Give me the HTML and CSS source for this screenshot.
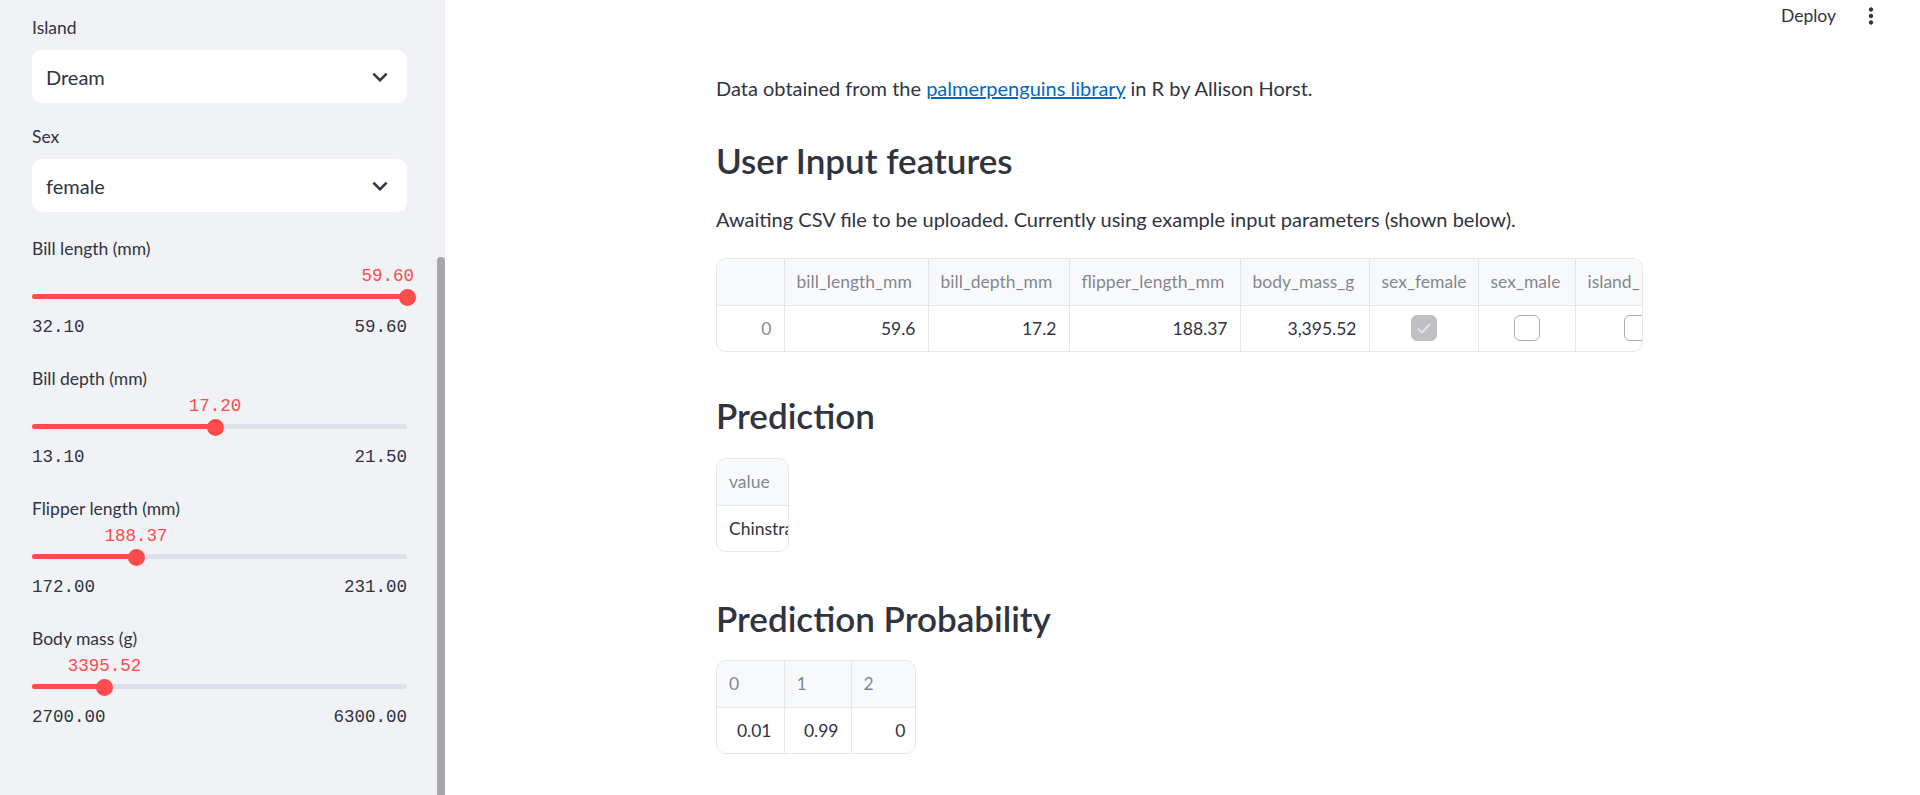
FILE: index.html
```html
<!DOCTYPE html>
<html>
<head>
<meta charset="utf-8">
<title>Penguin Prediction App</title>
<link rel="stylesheet" href="styles.css">
</head>
<body>
<div class="app">
  <aside class="sidebar">
    <div class="sidebar-content">
      <div class="field">
        <div class="label">Island</div>
        <div class="select"><span>Dream</span><svg class="chev" viewBox="0 0 24 24"><path d="M7.41 8.59 12 13.17l4.59-4.58L18 10l-6 6-6-6 1.41-1.41z"/></svg></div>
      </div>
      <div class="field field-last">
        <div class="label">Sex</div>
        <div class="select"><span>female</span><svg class="chev" viewBox="0 0 24 24"><path d="M7.41 8.59 12 13.17l4.59-4.58L18 10l-6 6-6-6 1.41-1.41z"/></svg></div>
      </div>

      <div class="slider">
        <div class="slider-label">Bill length (mm)</div>
        <div class="slider-body">
          <div class="thumb-value clamp-right">59.60</div>
          <div class="track"><div class="fill" style="width:100%"></div></div>
          <div class="thumb" style="left:100%"></div>
        </div>
        <div class="ticks"><span>32.10</span><span>59.60</span></div>
      </div>

      <div class="slider">
        <div class="slider-label">Bill depth (mm)</div>
        <div class="slider-body">
          <div class="thumb-value" style="left:48.81%">17.20</div>
          <div class="track"><div class="fill" style="width:48.81%"></div></div>
          <div class="thumb" style="left:48.81%"></div>
        </div>
        <div class="ticks"><span>13.10</span><span>21.50</span></div>
      </div>

      <div class="slider">
        <div class="slider-label">Flipper length (mm)</div>
        <div class="slider-body">
          <div class="thumb-value" style="left:27.75%">188.37</div>
          <div class="track"><div class="fill" style="width:27.75%"></div></div>
          <div class="thumb" style="left:27.75%"></div>
        </div>
        <div class="ticks"><span>172.00</span><span>231.00</span></div>
      </div>

      <div class="slider">
        <div class="slider-label">Body mass (g)</div>
        <div class="slider-body">
          <div class="thumb-value" style="left:19.32%">3395.52</div>
          <div class="track"><div class="fill" style="width:19.32%"></div></div>
          <div class="thumb" style="left:19.32%"></div>
        </div>
        <div class="ticks"><span>2700.00</span><span>6300.00</span></div>
      </div>
    </div>
    <div class="scrollbar"></div>
  </aside>

  <main class="main">
    <header class="topbar">
      <span class="deploy">Deploy</span>
      <svg class="kebab" viewBox="0 0 24 24"><path d="M12 8c1.1 0 2-.9 2-2s-.9-2-2-2-2 .9-2 2 .9 2 2 2zm0 2c-1.1 0-2 .9-2 2s.9 2 2 2 2-.9 2-2-.9-2-2-2zm0 6c-1.1 0-2 .9-2 2s.9 2 2 2 2-.9 2-2-.9-2-2-2z"/></svg>
    </header>

    <div class="block">
      <p class="intro">Data obtained from the <a href="#">palmerpenguins library</a> in R by Allison Horst.</p>

      <h3 class="h-first">User Input features</h3>
      <p class="await">Awaiting CSV file to be uploaded. Currently using example input parameters (shown below).</p>

      <div class="df df-wide">
        <table class="grid grid-wide">
          <colgroup>
            <col class="w-idx"><col class="w-144"><col class="w-141"><col class="w-171"><col class="w-129"><col class="w-109"><col class="w-97"><col class="w-124">
          </colgroup>
          <thead>
            <tr><th></th><th>bill_length_mm</th><th>bill_depth_mm</th><th>flipper_length_mm</th><th>body_mass_g</th><th>sex_female</th><th>sex_male</th><th>island_</th></tr>
          </thead>
          <tbody>
            <tr>
              <td class="idx">0</td><td class="num">59.6</td><td class="num">17.2</td><td class="num">188.37</td><td class="num">3,395.52</td>
              <td class="chk"><span class="cb cb-on"><svg viewBox="0 0 24 24"><path d="M6 12.5l4 4 8-8.5"/></svg></span></td>
              <td class="chk"><span class="cb"></span></td>
              <td class="chk"><span class="cb"></span></td>
            </tr>
          </tbody>
        </table>
      </div>

      <h3 class="h-pred">Prediction</h3>
      <div class="df df-pred">
        <table class="grid grid-pred">
          <colgroup><col class="w-pred"></colgroup>
          <thead><tr><th>value</th></tr></thead>
          <tbody><tr><td class="txt">Chinstrap</td></tr></tbody>
        </table>
      </div>

      <h3 class="h-prob">Prediction Probability</h3>
      <div class="df df-prob">
        <table class="grid grid-prob">
          <colgroup><col class="w-67"><col class="w-67"><col class="w-67"></colgroup>
          <thead><tr><th>0</th><th>1</th><th>2</th></tr></thead>
          <tbody><tr><td class="num">0.01</td><td class="num">0.99</td><td class="num">0</td></tr></tbody>
        </table>
      </div>
    </div>
  </main>
</div>
</body>
</html>
```

FILE: styles.css
```css
* { box-sizing: border-box; }

html, body {
  margin: 0;
  padding: 0;
  height: 100%;
  overflow: hidden;
  background: #ffffff;
}

body {
  font-family: "Lato", "Noto Sans", sans-serif;
  color: rgb(49, 51, 63);
}

.app {
  display: flex;
  height: 795px;
}

/* ---------- Sidebar ---------- */
.sidebar {
  width: 445px;
  flex: 0 0 445px;
  background: #f0f2f6;
  display: flex;
}

.sidebar-content {
  flex: 1;
  padding: 17px 30px 0 32px;
}

.scrollbar {
  width: 8px;
  margin-top: 257px;
  background: #a6a6ab;
  border-radius: 4px 4px 0 0;
}

.label {
  font-size: 17.5px;
  line-height: 22px;
  height: 22px;
  margin-bottom: 11px;
}

.field { margin-bottom: 23px; }
.field-last { margin-bottom: 26px; }

.select {
  height: 53px;
  background: #ffffff;
  border-radius: 10px;
  display: flex;
  align-items: center;
  justify-content: space-between;
  padding: 0 12px 0 14px;
  font-size: 20px;
}

.chev {
  width: 30px;
  height: 30px;
  fill: rgb(49, 51, 63);
}

.slider { margin-bottom: 30px; }

.slider-label {
  font-size: 17.5px;
  line-height: 22px;
  height: 22px;
}

.slider-body {
  position: relative;
  padding-top: 34px;
}

.track {
  height: 5px;
  border-radius: 3px;
  background: #dde0e8;
  overflow: hidden;
}

.fill {
  height: 100%;
  background: #ff4b4b;
}

.thumb {
  position: absolute;
  top: 28.5px;
  width: 17px;
  height: 17px;
  margin-left: -8.5px;
  border-radius: 50%;
  background: #ff4b4b;
}

.thumb-value {
  position: absolute;
  top: 5px;
  transform: translateX(-50%);
  font-family: "Liberation Mono", "DejaVu Sans Mono", monospace;
  font-size: 17.5px;
  line-height: 22px;
  color: #ff4b4b;
  white-space: nowrap;
}

.thumb-value.clamp-right {
  right: -7px;
  transform: none;
}

.ticks {
  display: flex;
  justify-content: space-between;
  margin-top: 17px;
  font-family: "Liberation Mono", "DejaVu Sans Mono", monospace;
  font-size: 17.5px;
  line-height: 22px;
}

/* ---------- Main ---------- */
.main {
  flex: 1;
  min-width: 0;
}

.topbar {
  height: 32px;
  display: flex;
  justify-content: flex-end;
  align-items: center;
  padding-right: 36px;
  gap: 22px;
}

.deploy {
  font-size: 17.5px;
  line-height: 22px;
}

.kebab {
  width: 26px;
  height: 26px;
  fill: rgb(49, 51, 63);
}

.block {
  margin-left: 271px;
  width: 927px;
  padding-top: 40px;
}

.intro, .await {
  margin: 0;
  font-size: 20px;
  line-height: 32px;
}

.intro a {
  color: #0068c9;
  text-decoration: underline;
}

.await { margin-top: 22px; }

h3 {
  margin: 0;
  font-size: 35px;
  line-height: 42px;
  font-weight: 600;
  color: rgb(49, 51, 63);
}

.h-first { margin-top: 35px; }
.h-pred { margin-top: 42px; }
.h-prob { margin-top: 45px; }

/* ---------- Data frames ---------- */
.df {
  border: 1px solid #e6e7ea;
  border-radius: 10px;
  overflow: hidden;
  background: #ffffff;
}

.df-wide { margin-top: 23px; width: 927px; }
.df-pred { margin-top: 22px; width: 73px; }
.df-prob { margin-top: 21px; width: 200px; }

.grid {
  border-collapse: collapse;
  table-layout: fixed;
  font-size: 17.5px;
}

.grid-wide { width: 982px; }
.grid-pred { width: 72px; }
.grid-prob { width: 201px; }

.w-idx { width: 67px; }
.w-144 { width: 144px; }
.w-141 { width: 141px; }
.w-171 { width: 171px; }
.w-129 { width: 129px; }
.w-109 { width: 109px; }
.w-97 { width: 97px; }
.w-124 { width: 124px; }
.w-pred { width: 72px; }
.w-67 { width: 67px; }

.grid th {
  height: 46px;
  background: #f8f9fb;
  color: rgba(49, 51, 63, 0.6);
  font-weight: 400;
  text-align: left;
  padding: 0 12px;
  border-right: 1px solid #e6e7ea;
  border-bottom: 1px solid #e6e7ea;
  white-space: nowrap;
  overflow: hidden;
}

.grid td {
  height: 46px;
  padding: 0 12px;
  border-right: 1px solid #e6e7ea;
  white-space: nowrap;
  overflow: hidden;
}

.grid td.idx {
  text-align: right;
  color: rgba(49, 51, 63, 0.6);
}

.grid td.num { text-align: right; }

.grid td.txt { text-overflow: clip; }

.grid td.chk {
  text-align: center;
  padding: 0;
}

.cb {
  display: inline-block;
  width: 26px;
  height: 26px;
  border: 1px solid #acaeb5;
  border-radius: 6px;
  background: #ffffff;
  vertical-align: middle;
}

.cb-on {
  background: #bfc0c5;
  border-color: #bfc0c5;
}

.cb svg {
  display: block;
  width: 24px;
  height: 24px;
  fill: none;
  stroke: #e9e9ec;
  stroke-width: 1.6;
}
```
